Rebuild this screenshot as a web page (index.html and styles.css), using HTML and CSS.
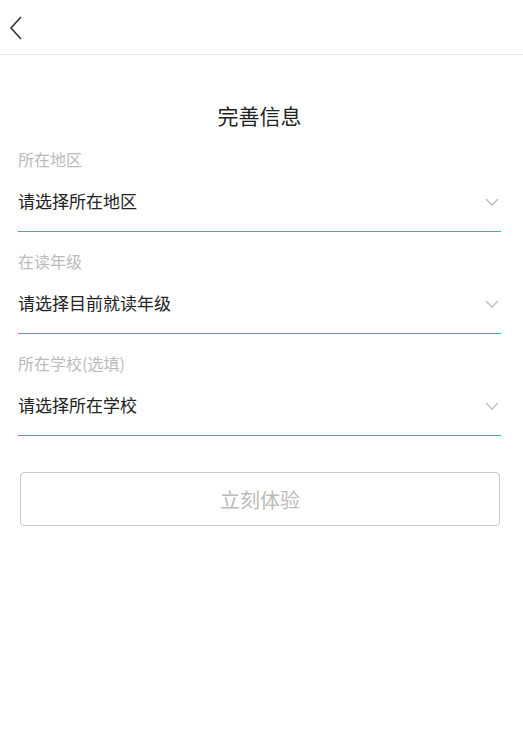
FILE: index.html
```html
<!DOCTYPE html>
<html lang="zh-CN">
<head>
    <meta charset="UTF-8">
    <meta name="viewport" content="width=device-width, initial-scale=1.0">
    <title>完善信息</title>
    <link rel="stylesheet" href="styles.css">
</head>

<body>
    <header class="nav-bar">
        <a class="back-btn" href="#">
            <svg width="16" height="26" viewBox="0 0 16 26">
                <path d="M13 2 L3 13 L13 24" fill="none" stroke="#333" stroke-width="1.6"/>
            </svg>
        </a>
    </header>

    <main class="form-page">
        <h1 class="page-title">完善信息</h1>

        <div class="field">
            <div class="field-label">所在地区</div>
            <div class="field-select">
                <span>请选择所在地区</span>
                <svg class="arrow" width="14" height="9" viewBox="0 0 14 9">
                    <path d="M1 1 L7 7 L13 1" fill="none" stroke="#bbb" stroke-width="1.3"/>
                </svg>
            </div>
        </div>

        <div class="field">
            <div class="field-label">在读年级</div>
            <div class="field-select">
                <span>请选择目前就读年级</span>
                <svg class="arrow" width="14" height="9" viewBox="0 0 14 9">
                    <path d="M1 1 L7 7 L13 1" fill="none" stroke="#bbb" stroke-width="1.3"/>
                </svg>
            </div>
        </div>

        <div class="field">
            <div class="field-label">所在学校(选填)</div>
            <div class="field-select">
                <span>请选择所在学校</span>
                <svg class="arrow" width="14" height="9" viewBox="0 0 14 9">
                    <path d="M1 1 L7 7 L13 1" fill="none" stroke="#bbb" stroke-width="1.3"/>
                </svg>
            </div>
        </div>

        <button class="submit-btn" disabled>立刻体验</button>
    </main>
</body>
</html>
```

FILE: styles.css
```css
body {
    margin: 0;
    font-family: "Noto Sans CJK SC", "Noto Sans", sans-serif;
    background: #fff;
    color: #222;
}

.nav-bar {
    height: 54px;
    border-bottom: 1px solid #e6e6e6;
    display: flex;
    align-items: center;
    padding-left: 8px;
}

.back-btn {
    display: flex;
    padding-top: 2px;
}

.form-page {
    padding: 45px 22px 0 18px;
}

.page-title {
    margin: 0;
    height: 30px;
    line-height: 30px;
    font-size: 21px;
    font-weight: normal;
    text-align: center;
    color: #222;
}

.field-label {
    margin-top: 18px;
    height: 22px;
    line-height: 22px;
    font-size: 16px;
    color: #bbb;
}

.field-select {
    height: 61px;
    display: flex;
    align-items: center;
    justify-content: space-between;
    border-bottom: 1px solid #1fbcae;
    font-size: 17px;
    color: #222;
}

.field-select .arrow {
    margin-right: 2px;
    margin-top: 3px;
}

.submit-btn {
    display: block;
    width: 480px;
    height: 54px;
    margin: 36px 0 0 2px;
    border: 1px solid #c8c8c8;
    border-radius: 4px;
    background: #fff;
    font-family: inherit;
    font-size: 20px;
    color: #bbb;
}
```
